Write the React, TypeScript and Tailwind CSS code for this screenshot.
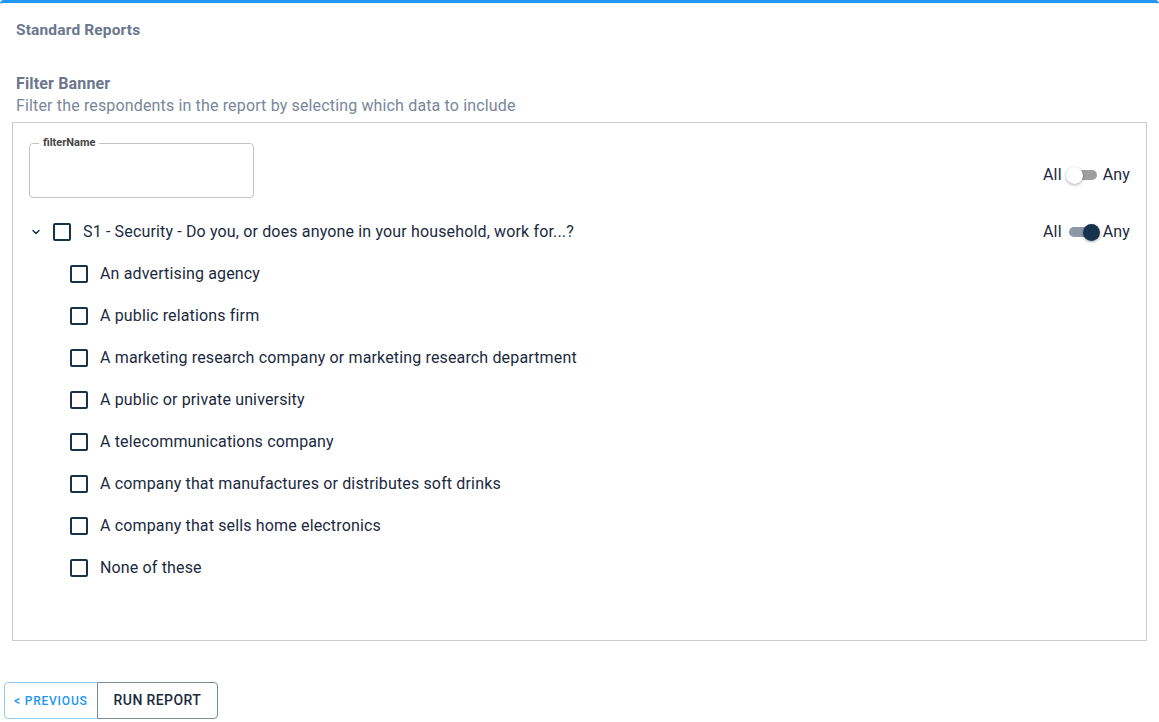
import React from "react";

const items = [
  "An advertising agency",
  "A public relations firm",
  "A marketing research company or marketing research department",
  "A public or private university",
  "A telecommunications company",
  "A company that manufactures or distributes soft drinks",
  "A company that sells home electronics",
  "None of these",
];

function Box() {
  return <span className="block w-[18px] h-[18px] border-2 border-[#17324d] rounded-[2px] shrink-0" />;
}

function Toggle({ on }: { on: boolean }) {
  return (
    <div className="flex items-center text-[16px] tracking-[0.15px] text-[#1b2a41]">
      <span>All</span>
      <span className="relative ml-[4px] mr-[3px] w-[34px] h-[17px] flex items-center">
        <span
          className={
            "absolute left-[3px] w-[28px] h-[10px] rounded-full " + (on ? "bg-[#17324d]/50" : "bg-[#9e9e9e]")
          }
        />
        <span
          className={
            "absolute top-0 w-[17px] h-[17px] rounded-full shadow-[0_1px_3px_rgba(0,0,0,0.35)] " +
            (on ? "left-[17px] bg-[#17324d]" : "left-0 bg-white")
          }
        />
      </span>
      <span>Any</span>
    </div>
  );
}

export default function App() {
  return (
    <div className="w-[1159px] h-[722px] bg-white font-['Roboto',sans-serif] overflow-hidden">
      <div className="border-t-[3px] border-[#2196f3] rounded-t-[4px] px-[12px]">
        <div className="px-[4px] pt-[17px] text-[15.5px] font-bold tracking-[0.15px] text-[#6b778c] leading-[20px]">Standard Reports</div>
        <div className="px-[4px] pt-[33px] text-[16px] font-bold tracking-[0.15px] text-[#6b778c] leading-[22px]">Filter Banner</div>
        <div className="px-[4px] text-[16px] tracking-[0.15px] text-[#7a8699] leading-[22px]">
          Filter the respondents in the report by selecting which data to include
        </div>
        <div className="mt-[5px] w-[1135px] h-[519px] border border-[#cccccc] pl-[16px] pr-[16px]">
          <div className="flex items-end justify-between pt-[20px]">
            <div className="relative w-[225px] h-[55px] border border-[#c4c4c4] rounded-[4px]">
              <span className="absolute -top-[8px] left-[9px] bg-white px-[4px] text-[11px] font-bold text-[#444] leading-[14px]">
                filterName
              </span>
            </div>
            <div className="mb-[11px]">
              <Toggle on={false} />
            </div>
          </div>
          <div className="flex items-center justify-between mt-[24px] h-[20px]">
            <div className="flex items-center text-[16px] tracking-[0.15px] text-[#1b2a41]">
              <svg width="12" height="12" viewBox="0 0 24 24" className="ml-[1px] mr-[11px]">
                <path d="M6 9l6 6 6-6" fill="none" stroke="#17324d" strokeWidth="3" strokeLinecap="round" strokeLinejoin="round" />
              </svg>
              <Box />
              <span className="ml-[12px]">S1 - Security - Do you, or does anyone in your household, work for...?</span>
            </div>
            <Toggle on={true} />
          </div>
          <div className="flex flex-col pl-[41px] pt-[23px] gap-[24px]">
            {items.map((t) => (
              <div key={t} className="flex items-center h-[18px] text-[16px] tracking-[0.15px] text-[#1b2a41]">
                <Box />
                <span className="ml-[12px]">{t}</span>
              </div>
            ))}
          </div>
        </div>
      </div>
      <div className="flex px-[4px] pt-[41px]">
        <button className="h-[37px] px-[9px] border border-[#90caf9] rounded-l-[4px] text-[12px] font-medium tracking-[0.8px] text-[#2196f3]">
          &lt; PREVIOUS
        </button>
        <button className="h-[37px] px-[16px] border border-[#7d8a99] -ml-px rounded-r-[4px] text-[14px] font-medium tracking-[0.4px] text-[#1b2a41]">
          RUN REPORT
        </button>
      </div>
    </div>
  );
}
